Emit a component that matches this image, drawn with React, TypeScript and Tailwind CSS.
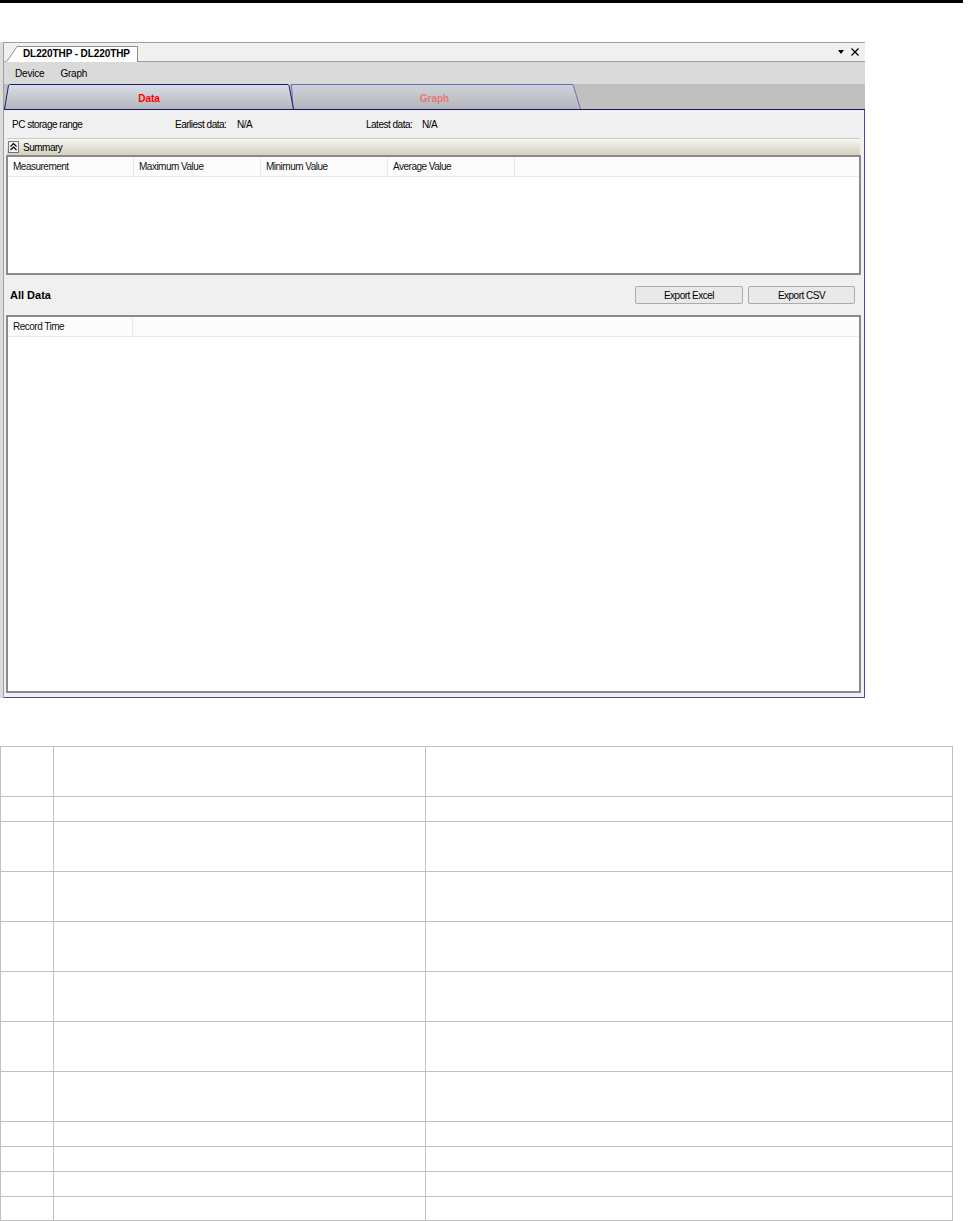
import React from "react";

const summaryCols = ["Measurement", "Maximum Value", "Minimum Value", "Average Value"];
const specRows = [50, 25, 50, 50, 50, 50, 50, 50, 25, 25, 25, 24];

function SummaryIcon() {
    return (
        <svg width="11" height="12" viewBox="0 0 11 12" className="shrink-0">
            <rect x="0.5" y="0.5" width="10" height="11" fill="#f4f4f4" stroke="#000" strokeWidth="1" strokeDasharray="1 1" />
            <polyline points="2.5,5.5 5.5,2.5 8.5,5.5" fill="none" stroke="#000" strokeWidth="1.2" />
            <polyline points="2.5,9 5.5,6 8.5,9" fill="none" stroke="#000" strokeWidth="1.2" />
        </svg>
    );
}

function DocTab() {
    return (
        <div className="relative h-[16px] w-[132px] -mb-px">
            <svg className="absolute inset-0" width="132" height="16" viewBox="0 0 132 16">
                <path d="M0.5 16 L11 0.5 L131.5 0.5 L131.5 16 Z" fill="#ffffff" stroke="#8c8c8c" strokeWidth="1" />
                <line x1="0.5" y1="15.5" x2="131" y2="15.5" stroke="#ffffff" strokeWidth="1" />
            </svg>
            <span className="relative block pl-[17px] leading-[16px] font-bold tracking-[-0.1px]">DL220THP - DL220THP</span>
        </div>
    );
}

function WindowButtons() {
    return (
        <div className="flex items-center gap-[7px] pr-[6px] self-center">
            <svg width="6" height="4" viewBox="0 0 6 4">
                <path d="M0 0 L6 0 L3 4 Z" fill="#000" />
            </svg>
            <svg width="8" height="8" viewBox="0 0 8 8">
                <path d="M0.5 0.5 L7.5 7.5 M7.5 0.5 L0.5 7.5" stroke="#000" strokeWidth="1.3" />
            </svg>
        </div>
    );
}

function Tabs() {
    return (
        <div className="h-[26px] flex items-end bg-[#c0c0c0] border-b border-[#14146e]">
            <div className="relative z-10 w-[290px] h-[25px]">
                <svg className="absolute inset-0" width="290" height="25" viewBox="0 0 290 25">
                    <defs>
                        <linearGradient id="dataTab" x1="0" y1="0" x2="0" y2="1">
                            <stop offset="0" stopColor="#d9dfe7" />
                            <stop offset="1" stopColor="#b3b6bb" />
                        </linearGradient>
                    </defs>
                    <path d="M0.5 25 L4.5 1.5 Q5 0.5 6.5 0.5 L283 0.5 Q284.5 0.5 285 1.5 L289.5 25" fill="url(#dataTab)" stroke="#1b1b72" strokeWidth="1" />
                </svg>
                <span className="absolute inset-0 flex items-center justify-center pt-[3px] font-bold tracking-normal text-[#ff0000]">Data</span>
            </div>
            <div className="relative -ml-[6px] w-[293px] h-[25px]">
                <svg className="absolute inset-0" width="293" height="25" viewBox="0 0 293 25">
                    <defs>
                        <linearGradient id="graphTab" x1="0" y1="0" x2="0" y2="1">
                            <stop offset="0" stopColor="#cfd3da" />
                            <stop offset="1" stopColor="#b5b6ba" />
                        </linearGradient>
                    </defs>
                    <path d="M5 25 L3.5 0.5 L285 0.5 L292.5 25" fill="url(#graphTab)" stroke="#6d6db5" strokeWidth="1" />
                </svg>
                <span className="absolute inset-0 flex items-center justify-center pt-[3px] font-bold tracking-normal text-[#ea7575]">Graph</span>
            </div>
        </div>
    );
}

function GridHeader({ cols, widths }: { cols: string[]; widths: string[] }) {
    return (
        <div className="h-[20px] flex shrink-0 bg-[#fcfcfd] border-b border-[#e2eaf5]">
            {cols.map((c, i) => (
                <div key={c} className={`${widths[i]} h-full flex items-center pl-[5px] border-r border-[#e2eaf5] text-[#111]`}>
                    {c}
                </div>
            ))}
        </div>
    );
}

function DeviceWindow() {
    return (
        <div className="mt-[39px] w-[865px] h-[656px] flex border-l-[3px] border-[#dcdcdc]">
            <div className="flex-1 flex flex-col border-l border-[#a0a0a0]">
                <div className="h-[20px] flex items-end justify-between bg-[#f0f0f0] border-t border-[#a0a0a0] border-b border-[#828282] pl-[2px]">
                    <DocTab />
                    <WindowButtons />
                </div>
                <div className="h-[22px] flex items-center gap-[16px] pl-[11px] bg-[#dadada] tracking-[-0.2px]">
                    <span>Device</span>
                    <span>Graph</span>
                </div>
                <Tabs />
                <div className="flex-1 flex flex-col bg-[#f0f0f0] border-r border-[#4c4c9c] border-b border-[#4a3f6a] pl-[2px] pr-[3px]">
                    <div className="h-[28px] flex items-center pl-[6px]">
                        <span className="w-[163px]">PC storage range</span>
                        <span className="w-[62px]">Earliest data:</span>
                        <span className="w-[129px]">N/A</span>
                        <span className="w-[56px]">Latest data:</span>
                        <span>N/A</span>
                    </div>
                    <div className="h-[17px] mx-[1px] flex items-center gap-[4px] pl-[1px] bg-gradient-to-b from-[#f8f7f2] to-[#d3d0bf] border-t border-[#c9c9c9]">
                        <SummaryIcon />
                        <span>Summary</span>
                    </div>
                    <div className="h-[120px] flex flex-col bg-white border-2 border-[#8a8a8a]">
                        <GridHeader cols={[...summaryCols, ""]} widths={["w-[126px]", "w-[127px]", "w-[127px]", "w-[127px]", "flex-1 border-r-0"]} />
                    </div>
                    <div className="h-[40px] flex items-center justify-between pl-[4px] pr-[6px]">
                        <span className="font-bold text-[11px] tracking-normal">All Data</span>
                        <div className="flex gap-[5px]">
                            <button className="w-[108px] h-[18px] bg-[#e9e9e9] border border-[#acacac] rounded-[2px]">Export Excel</button>
                            <button className="w-[107px] h-[18px] bg-[#e9e9e9] border border-[#acacac] rounded-[2px]">Export CSV</button>
                        </div>
                    </div>
                    <div className="h-[378px] flex flex-col bg-white border-2 border-[#8a8a8a]">
                        <GridHeader cols={["Record Time", ""]} widths={["w-[125px]", "flex-1 border-r-0"]} />
                    </div>
                </div>
            </div>
        </div>
    );
}

function SpecTable() {
    return (
        <table className="mt-[48px] w-[953px] table-fixed border-collapse">
            <colgroup>
                <col className="w-[53px]" />
                <col className="w-[372px]" />
                <col />
            </colgroup>
            <tbody>
                {specRows.map((h, i) => (
                    <tr key={i} style={{ height: h }}>
                        <td className="border border-[#c0c0c0]" />
                        <td className="border border-[#c0c0c0]" />
                        <td className="border border-[#c0c0c0]" />
                    </tr>
                ))}
            </tbody>
        </table>
    );
}

export default function App() {
    return (
        <div className="w-[970px] h-[1221px] overflow-hidden bg-white text-black font-['Liberation_Sans',Arial,sans-serif] text-[10px] tracking-[-0.5px]">
            <div className="h-[3px] w-[963px] bg-black" />
            <DeviceWindow />
            <SpecTable />
        </div>
    );
}
